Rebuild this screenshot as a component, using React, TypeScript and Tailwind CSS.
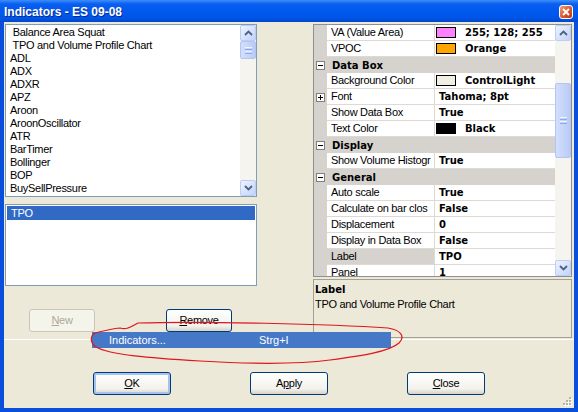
import React from "react";

type Row = {
  cat?: string;
  name?: string;
  value?: string;
  swatch?: string;
  plus?: boolean;
  selected?: boolean;
};

const rows: Row[] = [
  { name: "VA (Value Area)", value: "255; 128; 255", swatch: "#FF80FF" },
  { name: "VPOC", value: "Orange", swatch: "#FFA500" },
  { cat: "Data Box" },
  { name: "Background Color", value: "ControlLight", swatch: "#F1EFE2" },
  { name: "Font", value: "Tahoma; 8pt", plus: true },
  { name: "Show Data Box", value: "True" },
  { name: "Text Color", value: "Black", swatch: "#000000" },
  { cat: "Display" },
  { name: "Show Volume Histogr", value: "True" },
  { cat: "General" },
  { name: "Auto scale", value: "True" },
  { name: "Calculate on bar clos", value: "False" },
  { name: "Displacement", value: "0" },
  { name: "Display in Data Box", value: "False" },
  { name: "Label", value: "TPO", selected: true },
  { name: "Panel", value: "1" },
];

const indicators = [
  " Balance Area Squat",
  " TPO and Volume Profile Chart",
  "ADL",
  "ADX",
  "ADXR",
  "APZ",
  "Aroon",
  "AroonOscillator",
  "ATR",
  "BarTimer",
  "Bollinger",
  "BOP",
  "BuySellPressure",
];

function Chevron({ up }: { up?: boolean }) {
  return (
    <svg width="9" height="6" viewBox="0 0 9 6">
      <polyline
        points={up ? "1,5 4.5,1.5 8,5" : "1,1 4.5,4.5 8,1"}
        fill="none"
        stroke="#4D6185"
        strokeWidth="1.8"
      />
    </svg>
  );
}

function ScrollBtn({ up }: { up?: boolean }) {
  return (
    <div className="w-[16px] h-[16px] shrink-0 rounded-[2px] border border-[#BBCDF5] bg-[linear-gradient(135deg,#EEF3FE,#C2D3F9)] flex items-center justify-center">
      <Chevron up={up} />
    </div>
  );
}

function Thumb({ tall }: { tall?: boolean }) {
  return (
    <div
      className={`w-[16px] shrink-0 rounded-[2px] border border-[#B1C6F4] bg-[linear-gradient(90deg,#D3DFFC,#B9CBF7)] flex flex-col items-center justify-center gap-[1px] ${
        tall ? "h-[75px]" : "h-[18px]"
      }`}
    >
      <div className="h-px w-[7px] bg-[#EEF3FE]" />
      <div className="h-px w-[7px] bg-[#8DAAF0]" />
      <div className="h-px w-[7px] bg-[#EEF3FE]" />
      <div className="h-px w-[7px] bg-[#8DAAF0]" />
    </div>
  );
}

function ExpandBox({ minus }: { minus?: boolean }) {
  return (
    <div className="relative w-[9px] h-[9px] border border-[#808080] bg-white">
      <div className="absolute left-[1px] top-[3px] w-[5px] h-px bg-black" />
      {!minus && <div className="absolute left-[3px] top-[1px] w-px h-[5px] bg-black" />}
    </div>
  );
}

function XpButton({
  children,
  disabled,
  isDefault,
  small,
}: {
  children: React.ReactNode;
  disabled?: boolean;
  isDefault?: boolean;
  small?: boolean;
}) {
  return (
    <div
      className={`${small ? "w-[66px]" : "w-[78px]"} h-[23px] rounded-[3px] border flex items-center justify-center text-[11px] ${
        disabled
          ? "border-[#C9C7BA] bg-[#F5F4EA] text-[#ACA899]"
          : "border-[#003C74] bg-[linear-gradient(to_bottom,#FFFFFF,#F3F2EC_75%,#D8D3C8)] text-black"
      } ${isDefault ? "shadow-[inset_0_0_0_2px_#A6C2F0]" : ""}`}
    >
      {children}
    </div>
  );
}

export default function App() {
  return (
    <div className="relative w-[578px] h-[412px] bg-[#0A4FDC] flex flex-col overflow-hidden font-['Liberation_Sans',Arial,sans-serif] text-[11px] tracking-[-0.3px] text-black">
      {/* Title bar */}
      <div className="h-[22px] shrink-0 flex items-center bg-[linear-gradient(to_bottom,#3D8FFB_0%,#0A5EF0_18%,#0058EE_55%,#0054E4_85%,#0046CC_100%)]">
        <span className="pl-[4px] pt-[2px] text-[12px] font-bold tracking-normal text-white [text-shadow:1px_1px_0_#0A2A8C]">
          Indicators - ES 09-08
        </span>
        <div className="ml-auto mr-[5px] mt-[1px] w-[14px] h-[14px] rounded-[3px] border border-white bg-[linear-gradient(135deg,#F0A080,#D9572E_55%,#B8381A)] flex items-center justify-center">
          <svg width="8" height="8" viewBox="0 0 8 8">
            <path d="M1 1 L7 7 M7 1 L1 7" stroke="white" strokeWidth="1.8" />
          </svg>
        </div>
      </div>

      {/* Frame */}
      <div className="flex-1 flex flex-col px-[4px] pb-[4px]">
        <div className="relative flex-1 flex flex-col bg-[#ECE9D8]">
          <div className="flex h-[316px]">
            {/* Left column */}
            <div className="ml-[1px] w-[252px] flex flex-col">
              <div className="mt-[2px] h-[173px] border border-[#7F9DB9] bg-white flex">
                <div className="flex-1 pt-[1px] pl-[4px]">
                  {indicators.map((t, i) => (
                    <div key={i} className="h-[13px] leading-[13px] whitespace-pre">
                      {t}
                    </div>
                  ))}
                </div>
                <div className="w-[16px] flex flex-col bg-[#F5F4EF]">
                  <ScrollBtn up />
                  <Thumb />
                  <div className="flex-1" />
                  <ScrollBtn />
                </div>
              </div>
              <div className="mt-[7px] h-[82px] border border-[#7F9DB9] bg-white p-[1px]">
                <div className="h-[14px] leading-[14px] bg-[#316AC5] text-white pl-[4px]">TPO</div>
              </div>
              <div className="mt-[23px] flex">
                <div className="ml-[24px]">
                  <XpButton disabled small>
                    <span className="underline">N</span>ew
                  </XpButton>
                </div>
                <div className="ml-[71px]">
                  <XpButton small>
                    <span className="underline">R</span>emove
                  </XpButton>
                </div>
              </div>
            </div>

            {/* Right column */}
            <div className="ml-[56px] w-[259px] flex flex-col">
              <div className="mt-[2px] h-[253px] border border-[#8F8F8F] bg-white flex overflow-hidden">
                <div className="w-[241px] flex flex-col">
                  {rows.map((r, i) =>
                    r.cat ? (
                      <div key={i} className="h-[16px] shrink-0 flex items-center bg-[#D6D3CE]">
                        <div className="w-[13px] flex justify-center">
                          <ExpandBox minus />
                        </div>
                        <span className="pl-[5px] font-['DejaVu_Sans',sans-serif] font-bold text-[10px] tracking-normal">
                          {r.cat}
                        </span>
                      </div>
                    ) : (
                      <div key={i} className="h-[16px] shrink-0 flex">
                        <div className="w-[13px] bg-[#D6D3CE] flex items-center justify-center">
                          {r.plus && <ExpandBox />}
                        </div>
                        <div
                          className={`w-[108px] border-r border-b border-[#DCDAD3] pl-[4px] leading-[15px] whitespace-nowrap overflow-hidden ${
                            r.selected ? "bg-[#D6D3CE]" : ""
                          }`}
                        >
                          {r.name}
                        </div>
                        <div
                          className={`flex-1 border-b border-[#DCDAD3] flex items-center ${
                            r.swatch ? "pl-[1px]" : "pl-[4px]"
                          }`}
                        >
                          {r.swatch && (
                            <div
                              className="w-[20px] h-[11px] border border-black mr-[9px]"
                              style={{ backgroundColor: r.swatch }}
                            />
                          )}
                          <span className="font-['DejaVu_Sans',sans-serif] font-bold text-[10px] tracking-normal">
                            {r.value}
                          </span>
                        </div>
                      </div>
                    )
                  )}
                </div>
                <div className="w-[16px] flex flex-col bg-[#F5F4EF]">
                  <ScrollBtn up />
                  <div className="h-[42px] shrink-0" />
                  <Thumb tall />
                  <div className="flex-1" />
                  <ScrollBtn />
                </div>
              </div>
              <div className="mt-[2px] h-[59px] border border-[#A3A196] px-[1px] pt-[3px]">
                <div className="h-[13px] leading-[13px] font-['DejaVu_Sans',sans-serif] font-bold text-[10px] tracking-normal">
                  Label
                </div>
                <div className="h-[14px] leading-[14px] mt-[1px]">TPO and Volume Profile Chart</div>
              </div>
            </div>
          </div>

          <div className="mt-[1px] h-px bg-white" />

          {/* Bottom buttons */}
          <div className="mt-[32px] pl-[89px] flex gap-[79px]">
            <XpButton isDefault>
              <span className="underline">O</span>K
            </XpButton>
            <XpButton>
              A<span className="underline">p</span>ply
            </XpButton>
            <XpButton>
              <span className="underline">C</span>lose
            </XpButton>
          </div>

          {/* Resize grip */}
          <svg className="absolute right-[2px] bottom-[2px]" width="10" height="10" viewBox="0 0 10 10">
            {[
              [7, 1],
              [7, 4],
              [4, 4],
              [7, 7],
              [4, 7],
              [1, 7],
            ].map(([x, y], i) => (
              <g key={i}>
                <rect x={x + 1} y={y + 1} width="2" height="2" fill="#FFFFFF" />
                <rect x={x} y={y} width="2" height="2" fill="#B5B2A5" />
              </g>
            ))}
          </svg>
        </div>
      </div>

      {/* Context menu item overlay */}
      <div className="absolute left-[92px] top-[332px] w-[299px] h-[16px] bg-[#4579C8] text-white flex items-center pl-[17px] tracking-normal">
        <span className="w-[150px]">Indicators...</span>
        <span>Strg+I</span>
      </div>

      {/* Red hand-drawn ellipse */}
      <svg
        className="absolute left-0 top-0 pointer-events-none"
        width="578"
        height="412"
        viewBox="0 0 578 412"
      >
        <path
          d="M138 323 C200 321 330 324 388 328 C400 330 406 336 399 343 C389 352 360 356 330 360 C300 364 250 364 200 361 C150 358 110 355 96 347 C90 343 90 336 95 333 C103 331 110 329 120 328 C127 330 130 327 138 323 Z"
          fill="none"
          stroke="#E0161C"
          strokeWidth="1.2"
        />
      </svg>
    </div>
  );
}
